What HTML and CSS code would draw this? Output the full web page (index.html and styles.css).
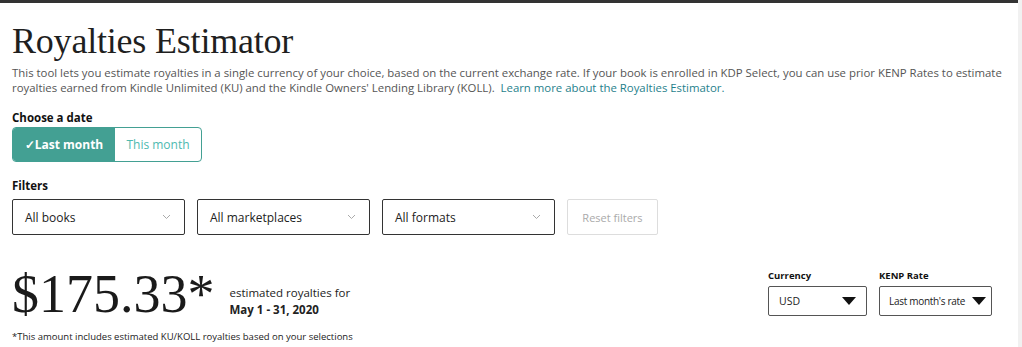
FILE: index.html
```html
<!DOCTYPE html>
<html>
<head>
<meta charset="utf-8">
<link rel="stylesheet" href="styles.css">
</head>
<body>
<div class="frame">
  <div class="page">
    <div class="topbar"></div>
    <div class="content">
      <h1 class="title">Royalties Estimator</h1>
      <p class="desc">This tool lets you estimate royalties in a single currency of your choice, based on the current exchange rate. If your book is enrolled in KDP Select, you can use prior KENP Rates to estimate royalties earned from Kindle Unlimited (KU) and the Kindle Owners' Lending Library (KOLL). &nbsp;<a class="link" href="#">Learn more about the Royalties Estimator.</a></p>

      <div class="label date-label">Choose a date</div>
      <div class="toggle">
        <div class="tog active">✓Last month</div>
        <div class="tog">This month</div>
      </div>

      <div class="label filters-label">Filters</div>
      <div class="filters">
        <div class="select"><span>All books</span><svg class="chev" width="9" height="6" viewBox="0 0 9 6"><path d="M1 1l3.5 3.5L8 1" fill="none" stroke="#aaa" stroke-width="1"/></svg></div>
        <div class="select"><span>All marketplaces</span><svg class="chev" width="9" height="6" viewBox="0 0 9 6"><path d="M1 1l3.5 3.5L8 1" fill="none" stroke="#aaa" stroke-width="1"/></svg></div>
        <div class="select"><span>All formats</span><svg class="chev" width="9" height="6" viewBox="0 0 9 6"><path d="M1 1l3.5 3.5L8 1" fill="none" stroke="#aaa" stroke-width="1"/></svg></div>
        <div class="reset">Reset filters</div>
      </div>

      <div class="summary">
        <div class="left">
          <div class="amount-row">
            <div class="amount">$175.33*</div>
            <div class="period">
              <div class="period-top">estimated royalties for</div>
              <div class="period-bot">May 1 - 31, 2020</div>
            </div>
          </div>
          <div class="note">*This amount includes estimated KU/KOLL royalties based on your selections</div>
        </div>
        <div class="right">
          <div class="field">
            <div class="flabel">Currency</div>
            <div class="dd dd-cur"><span>USD</span><svg width="14" height="8" viewBox="0 0 14 8"><path d="M0 0h14L7 8z" fill="#111"/></svg></div>
          </div>
          <div class="field">
            <div class="flabel">KENP Rate</div>
            <div class="dd dd-kenp"><span>Last month's rate</span><svg width="14" height="8" viewBox="0 0 14 8"><path d="M0 0h14L7 8z" fill="#111"/></svg></div>
          </div>
        </div>
      </div>
    </div>
  </div>
  <div class="gutter"></div>
</div>
</body>
</html>
```

FILE: styles.css
```css
* { box-sizing: border-box; }
html, body { margin: 0; padding: 0; background: #fff; }
body { font-family: "Open Sans", "Liberation Sans", sans-serif; color: #111; }
.frame { display: flex; width: 1022px; height: 347px; overflow: hidden; }
.page { flex: 1; }
.gutter { width: 4px; background: #f1f1f1; }
.topbar { height: 3px; background: #333; }
.content { padding: 0 0 0 12px; }
.title {
  margin: 0 0 5px;
  padding-top: 19px;
  font-family: "Liberation Serif", serif;
  font-weight: normal;
  font-size: 36px;
  line-height: 38px;
  color: #1f1f1f;
  letter-spacing: -0.2px;
}
.desc {
  margin: 0;
  font-size: 11.4px;
  line-height: 15px;
  color: #555;
  padding-right: 2px;
}
.link { display: inline-block; line-height: 15px; color: #1f7f8c; text-decoration: none; }
.label { font-weight: bold; font-size: 11.5px; color: #111; }
.date-label { margin-top: 15px; line-height: 16px; }
.toggle { display: flex; margin-top: 1px; width: 190px; height: 35px; border: 1px solid #43a093; border-radius: 4px; overflow: hidden; }
.tog { display: flex; align-items: center; justify-content: center; font-size: 12px; color: #4dbab0; }
.tog.active { background: #43a093; color: #fff; font-weight: bold; width: 102px; }
.tog:not(.active) { flex: 1; }
.filters-label { margin-top: 16px; line-height: 16px; }
.filters { display: flex; gap: 12px; margin-top: 5px; }
.select {
  width: 173px; height: 36px;
  border: 1px solid #333;
  border-radius: 2px;
  display: flex; align-items: center; justify-content: space-between;
  padding: 0 13px 0 12px;
  font-size: 12px; color: #222;
}
.reset {
  width: 91px; height: 36px;
  border: 1px solid #ddd;
  border-radius: 2px;
  display: flex; align-items: center; justify-content: center;
  font-size: 11px; color: #aaa;
}
.summary { display: flex; justify-content: space-between; align-items: flex-start; padding-right: 26px; margin-top: 29px; }
.amount-row { display: flex; align-items: flex-start; gap: 15px; }
.amount {
  font-family: "Liberation Serif", serif;
  font-size: 54px;
  line-height: 60px;
  color: #1a1a1a;
}
.period { margin-top: 20px; font-size: 11.5px; line-height: 17px; color: #222; }
.period-bot { font-weight: bold; }
.note { font-size: 9.5px; color: #222; margin-top: 6px; }
.right { display: flex; gap: 12px; margin-top: 5px; }
.flabel { font-weight: bold; font-size: 9.5px; line-height: 13px; margin-bottom: 4px; color: #111; }
.dd {
  height: 30px;
  border: 1px solid #555;
  border-radius: 2px;
  display: flex; align-items: center; justify-content: space-between;
  font-size: 10.5px; color: #222;
  white-space: nowrap;
}
.dd-cur { width: 99px; padding: 0 10px; }
.dd-kenp { width: 113px; padding: 0 5px 0 9px; font-size: 10px; letter-spacing: -0.3px; }
```
